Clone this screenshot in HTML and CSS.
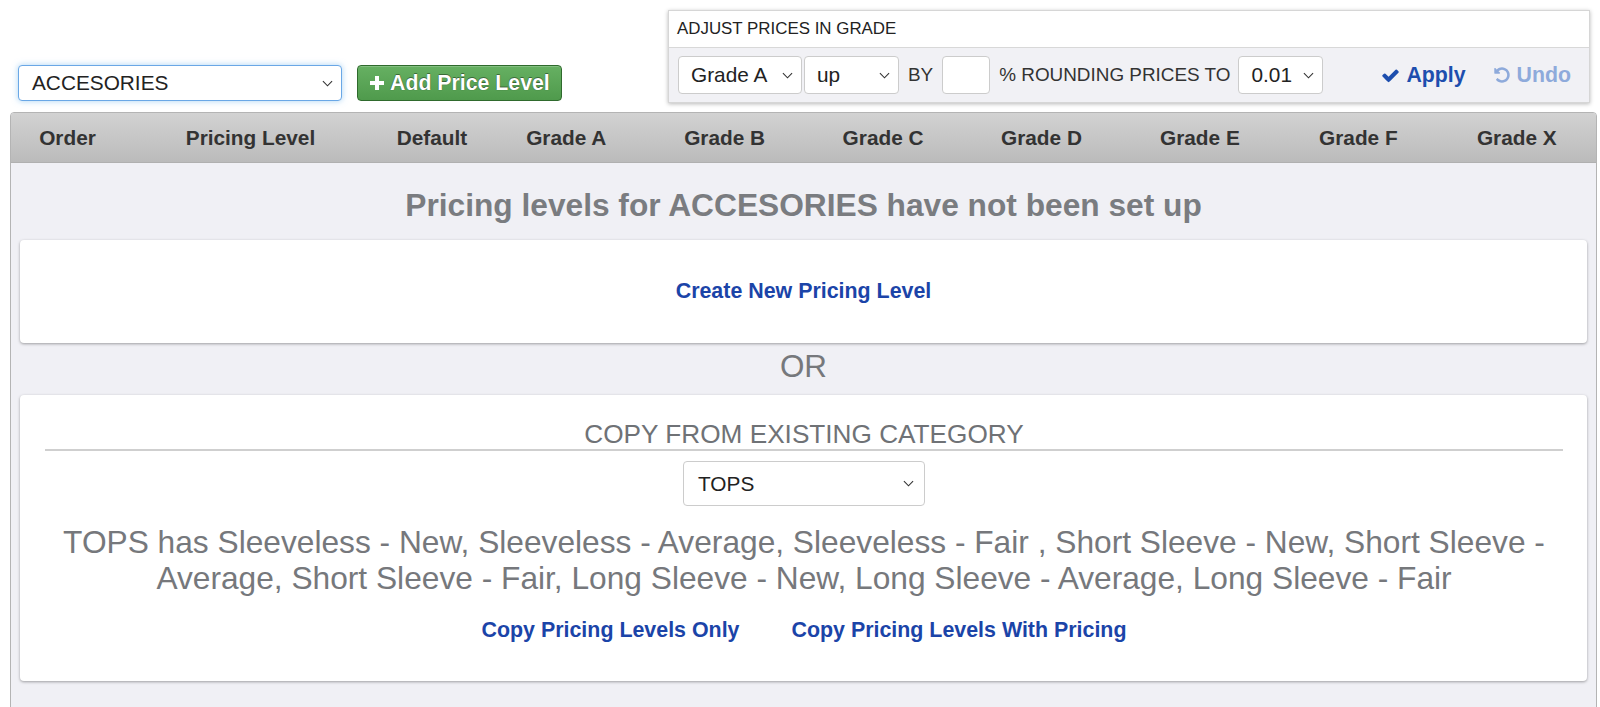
FILE: index.html
```html
<!DOCTYPE html>
<html lang="en">
<head>
<meta charset="utf-8">
<title>Pricing Levels</title>
<link rel="stylesheet" href="styles.css">
</head>
<body>
<div class="page">
  <div class="toolbar">
    <div class="left-tools">
      <div class="select select-cat focused">
        <span>ACCESORIES</span>
        <svg class="chev" viewBox="0 0 12 7"><path d="M1 1l5 5 5-5"/></svg>
      </div>
      <button class="btn-add">
        <svg class="plus" viewBox="0 0 16 16"><path d="M6 1h4v5h5v4h-5v5H6v-5H1V6h5z"/></svg>
        <span>Add Price Level</span>
      </button>
    </div>
    <div class="adjust">
      <div class="adjust-title">ADJUST PRICES IN GRADE</div>
      <div class="adjust-row">
        <div class="select sel-grade"><span>Grade A</span><svg class="chev" viewBox="0 0 12 7"><path d="M1 1l5 5 5-5"/></svg></div>
        <div class="select sel-dir"><span>up</span><svg class="chev" viewBox="0 0 12 7"><path d="M1 1l5 5 5-5"/></svg></div>
        <span class="lbl lbl-by">BY</span>
        <div class="input"></div>
        <span class="lbl lbl-round">% ROUNDING PRICES TO</span>
        <div class="select sel-round"><span>0.01</span><svg class="chev" viewBox="0 0 12 7"><path d="M1 1l5 5 5-5"/></svg></div>
        <a class="act apply"><svg viewBox="0 0 1792 1792"><path d="M1671 566q0 40-28 68l-724 724-136 136q-28 28-68 28t-68-28l-136-136-362-362q-28-28-28-68t28-68l136-136q28-28 68-28t68 28l294 295 656-657q28-28 68-28t68 28l136 136q28 28 28 68z"/></svg>Apply</a>
        <a class="act undo"><svg viewBox="0 0 1792 1792"><path d="M1664 896q0 156-61 298t-164 245-245 164-298 61q-172 0-327-72.5t-264-204.5q-7-10-6.5-22.5t8.5-20.5l137-138q10-9 25-9 16 2 23 12 73 95 179 147t225 52q104 0 198.5-40.5t163.5-109.5 109.5-163.5 40.5-198.5-40.5-198.5-109.5-163.5-163.5-109.5-198.5-40.5q-98 0-188 35.5t-160 101.5l137 138q31 30 14 69-17 40-59 40h-448q-26 0-45-19t-19-45v-448q0-42 40-59 39-17 69 14l130 129q107-101 244.5-156.5t284.5-55.5q156 0 298 61t245 164 164 245 61 298z"/></svg>Undo</a>
      </div>
    </div>
  </div>

  <div class="grid">
    <div class="thead">
      <div>Order</div>
      <div>Pricing Level</div>
      <div>Default</div>
      <div>Grade A</div>
      <div>Grade B</div>
      <div>Grade C</div>
      <div>Grade D</div>
      <div>Grade E</div>
      <div>Grade F</div>
      <div>Grade X</div>
    </div>
    <div class="tbody">
      <h2 class="empty-msg">Pricing levels for ACCESORIES have not been set up</h2>
      <div class="card card-create">
        <a class="link">Create New Pricing Level</a>
      </div>
      <div class="or">OR</div>
      <div class="card card-copy">
        <div class="copy-title">COPY FROM EXISTING CATEGORY</div>
        <div class="select sel-tops"><span>TOPS</span><svg class="chev" viewBox="0 0 12 7"><path d="M1 1l5 5 5-5"/></svg></div>
        <p class="desc">TOPS has Sleeveless - New, Sleeveless - Average, Sleeveless - Fair , Short Sleeve - New, Short Sleeve - Average, Short Sleeve - Fair, Long Sleeve - New, Long Sleeve - Average, Long Sleeve - Fair</p>
        <div class="copy-links">
          <a class="link">Copy Pricing Levels Only</a>
          <a class="link">Copy Pricing Levels With Pricing</a>
        </div>
      </div>
    </div>
  </div>
</div>
</body>
</html>
```

FILE: styles.css
```css
* { box-sizing: border-box; }
html, body { margin: 0; padding: 0; background: #fff; }
body {
  font-family: "Liberation Sans", Arial, Helvetica, sans-serif;
  color: #333;
  width: 1600px;
  height: 707px;
  overflow: hidden;
}
.page { padding: 10px 3px 0 10px; }

.toolbar {
  display: flex;
  justify-content: space-between;
  align-items: flex-end;
  height: 93px;
}
.left-tools {
  display: flex;
  align-items: center;
  gap: 15px;
  margin-left: 8px;
  margin-bottom: 2px;
}

.select {
  display: flex;
  align-items: center;
  justify-content: space-between;
  background: #fff;
  border: 1px solid #ccc;
  border-radius: 4px;
  font-size: 20.8px;
  color: #222;
  padding: 0 8px 0 12px;
}
.select .chev {
  width: 11px;
  height: 7px;
  fill: none;
  stroke: #333;
  stroke-width: 1.2;
  flex: none;
}
.select-cat {
  width: 324px;
  height: 36px;
  padding-left: 13px;
}
.select-cat.focused {
  border-color: #6aa7e6;
  box-shadow: 0 0 6px rgba(102, 175, 233, .55);
}

.btn-add {
  display: flex;
  align-items: center;
  gap: 5px;
  width: 205px;
  height: 36px;
  padding: 0 0 0 11px;
  border: 1px solid #2f6a2d;
  border-radius: 4px;
  background: linear-gradient(#66b062, #4f9a4c);
  color: #fff;
  font-family: "Liberation Sans", Arial, sans-serif;
  font-weight: bold;
  font-size: 21.3px;
  text-shadow: 0 0 1px rgba(0,0,0,.5), 0 -1px 0 rgba(0,0,0,.35);
  box-shadow: inset 0 1px 0 rgba(255,255,255,.2);
}
.btn-add .plus { width: 16px; height: 16px; fill: #fff; }

.adjust {
  width: 922px;
  height: 93px;
  margin-right: 7px;
  border: 1px solid #d6d6d6;
  background: #fff;
  box-shadow: 0 1px 4px rgba(0,0,0,.28);
  display: flex;
  flex-direction: column;
}
.adjust-title {
  height: 36px;
  line-height: 36px;
  padding-left: 8px;
  font-size: 16.9px;
  color: #222;
}
.adjust-row {
  flex: 1;
  display: flex;
  align-items: center;
  background: #f1f1f5;
  border-top: 1px solid #d8d8d8;
  padding: 0 18px 0 9px;
}
.adjust-row .select {
  height: 38px;
  padding: 0 8px 0 12px;
}
.sel-grade { width: 124px; }
.sel-dir { width: 95px; margin-left: 2px; }
.sel-round { width: 85px; padding-left: 11px; }
.lbl { font-size: 18.9px; color: #333; }
.lbl-by { margin: 0 9px; }
.lbl-round { margin: 0 8px 0 9px; }
.input {
  width: 48px;
  height: 38px;
  background: #fff;
  border: 1px solid #ccc;
  border-radius: 4px;
}
.act {
  display: flex;
  align-items: center;
  gap: 6px;
  font-weight: bold;
  font-size: 21.3px;
  cursor: pointer;
}
.act svg { width: 19px; height: 19px; }
.apply { margin-left: auto; color: #1d4eae; }
.apply svg { fill: #1d4eae; }
.undo { margin-left: 27px; color: #8eaadb; }
.undo svg { fill: #8eaadb; width: 18px; height: 18px; }

.grid {
  margin-top: 9px;
  border: 1px solid #b4b4b4;
  border-radius: 4px 4px 0 0;
  background: #f0f0f5;
  height: 600px;
}
.thead {
  display: grid;
  grid-template-columns: 113px 253px 110px repeat(7, 1fr);
  height: 50px;
  align-items: center;
  background: linear-gradient(#d2d2d2, #bbbbbb);
  border-bottom: 1px solid #b0b0b0;
  border-radius: 3px 3px 0 0;
}
.thead div {
  text-align: center;
  font-weight: bold;
  font-size: 20.8px;
  color: #333;
}

.tbody { padding: 0 9px 30px 9px; }
.empty-msg {
  margin: 24px 0 17px;
  text-align: center;
  font-size: 31.7px;
  line-height: 36px;
  font-weight: bold;
  color: #7a7c80;
}
.card {
  background: #fff;
  border-radius: 4px;
  box-shadow: 0 1px 3px rgba(0,0,0,.35);
}
.card-create {
  height: 103px;
  display: flex;
  align-items: center;
  justify-content: center;
}
.link {
  color: #1b44a8;
  font-weight: bold;
  font-size: 21.4px;
  line-height: 25px;
  cursor: pointer;
}
.or {
  margin: 6px 0 10px;
  text-align: center;
  font-size: 31.4px;
  line-height: 36px;
  color: #76787c;
}
.card-copy {
  height: 286px;
  padding: 24px 24px 0 25px;
  display: flex;
  flex-direction: column;
  align-items: center;
}
.copy-title {
  align-self: stretch;
  text-align: center;
  font-size: 26.2px;
  line-height: 30px;
  color: #6f7276;
  border-bottom: 2px solid #cfcfcf;
}
.sel-tops {
  margin-top: 10px;
  width: 242px;
  height: 45px;
  padding: 0 10px 0 14px;
}
.desc {
  margin: 18px 0 0;
  text-align: center;
  font-size: 31.7px;
  line-height: 36px;
  color: #76787c;
}
.copy-links {
  margin-top: 22px;
  display: flex;
  gap: 52px;
}
```
